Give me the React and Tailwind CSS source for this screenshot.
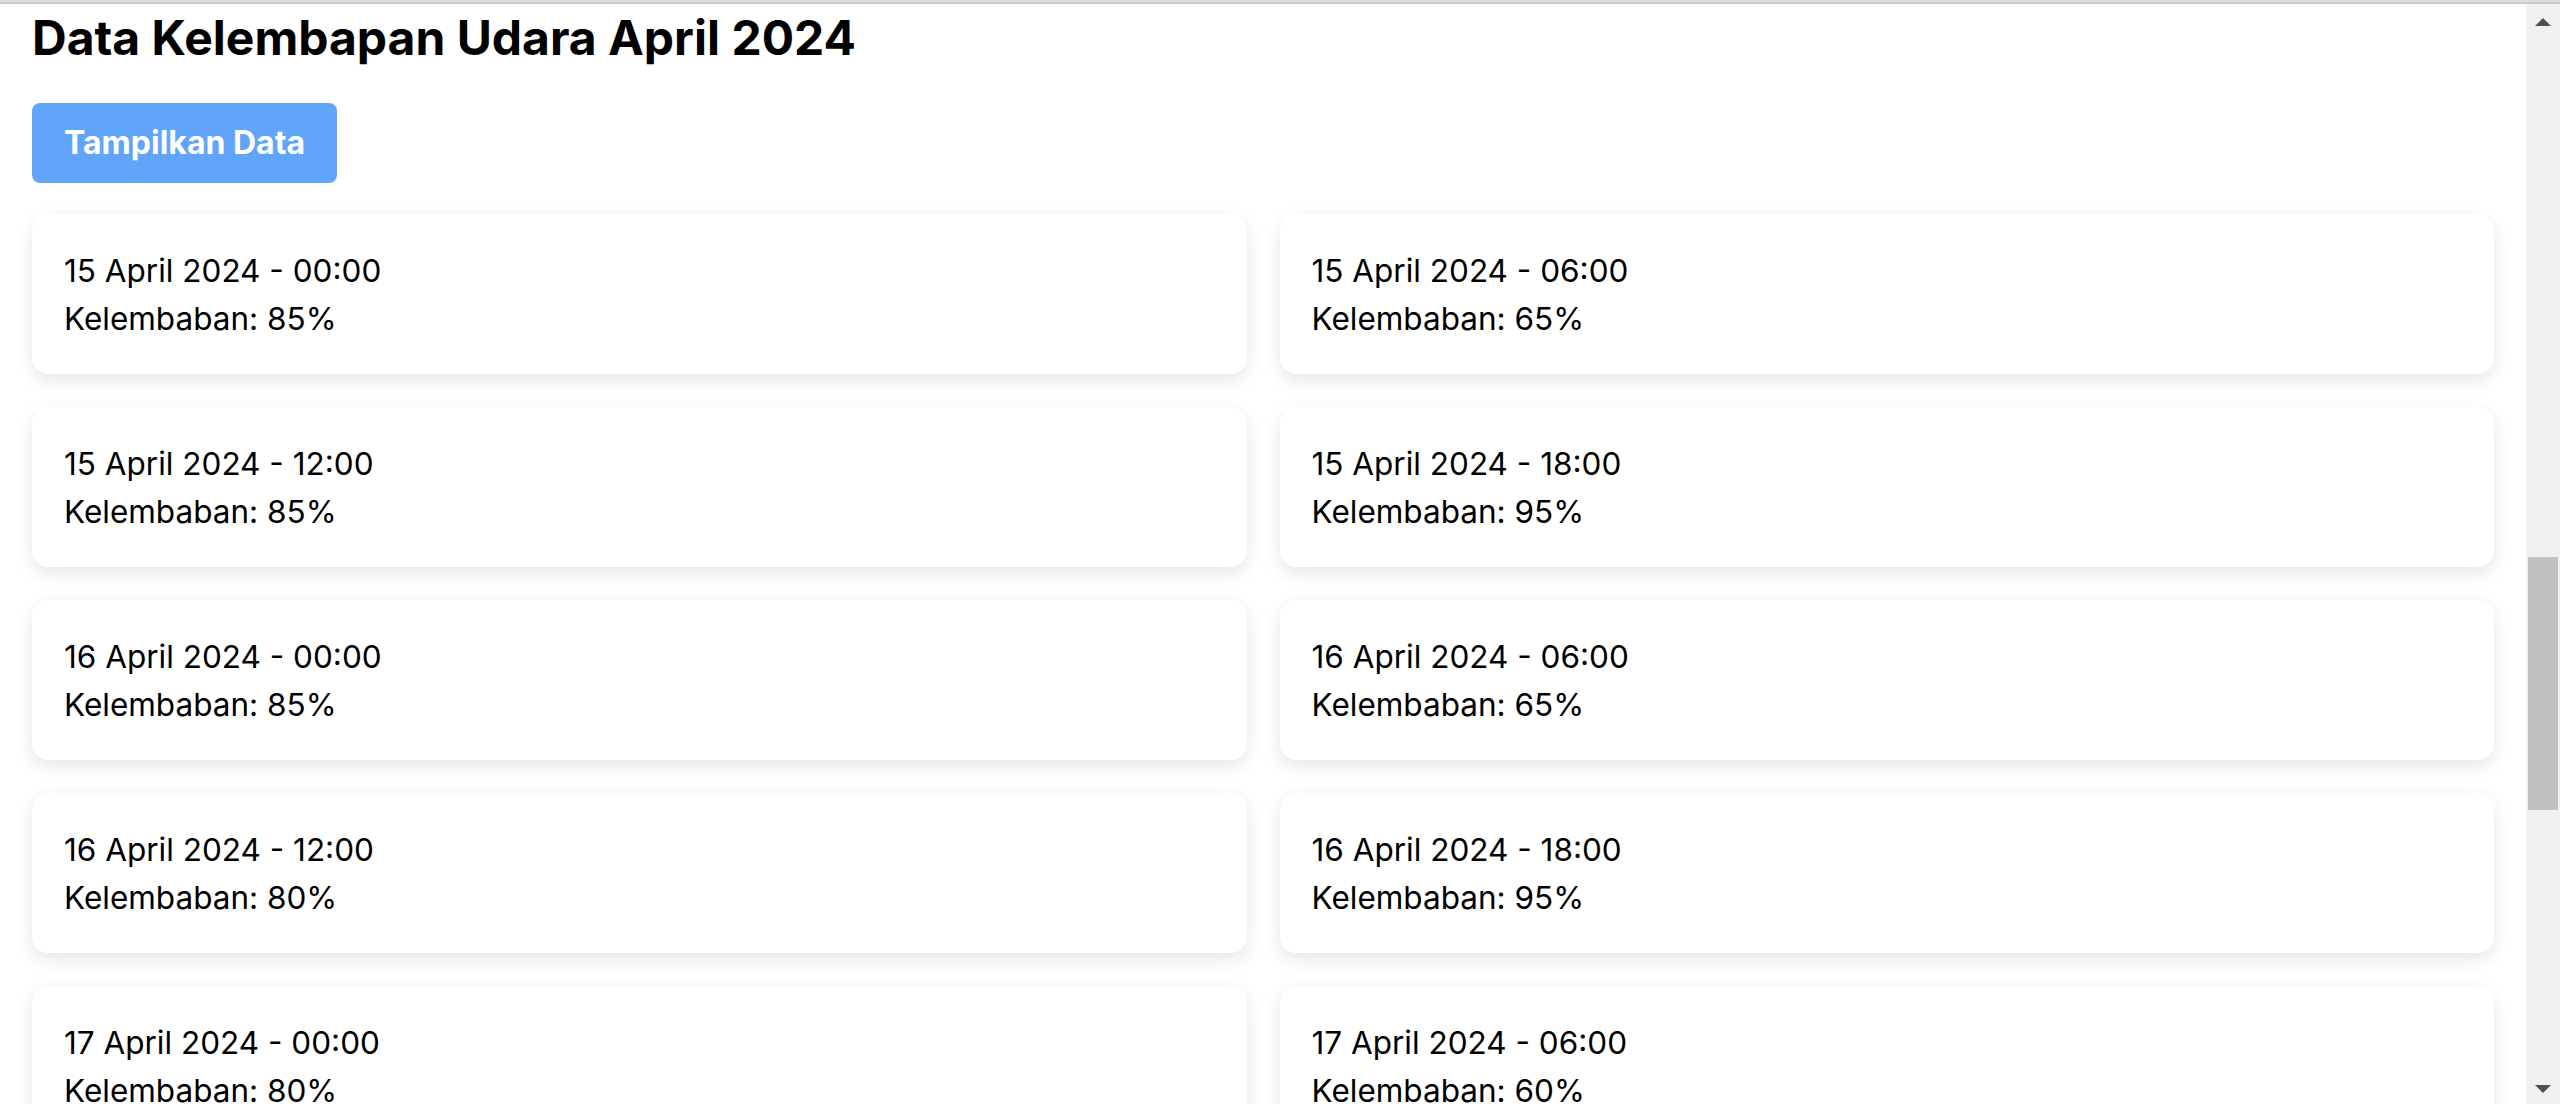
const data = [
    { date: '15 April 2024', time: '00:00', humidity: 85 },
    { date: '15 April 2024', time: '06:00', humidity: 65 },
    { date: '15 April 2024', time: '12:00', humidity: 85 },
    { date: '15 April 2024', time: '18:00', humidity: 95 },
    { date: '16 April 2024', time: '00:00', humidity: 85 },
    { date: '16 April 2024', time: '06:00', humidity: 65 },
    { date: '16 April 2024', time: '12:00', humidity: 80 },
    { date: '16 April 2024', time: '18:00', humidity: 95 },
    { date: '17 April 2024', time: '00:00', humidity: 80 },
    { date: '17 April 2024', time: '06:00', humidity: 60 },
];

const Scrollbar = () => (
    <div className="w-[34px] shrink-0 bg-[#f0f0f0] flex flex-col items-center">
        <svg width="16" height="8" viewBox="0 0 16 8" className="mt-[14px] shrink-0">
            <polygon points="8,0 16,8 0,8" fill="#505050" />
        </svg>
        <div className="h-[531px] shrink-0"></div>
        <div className="w-[30px] h-[253px] bg-[#c1c1c1] shrink-0"></div>
        <div className="flex-1"></div>
        <svg width="16" height="8" viewBox="0 0 16 8" className="mb-[11px] shrink-0">
            <polygon points="0,0 16,0 8,8" fill="#505050" />
        </svg>
    </div>
);

const App = () => {
    return (
        <div className="h-[1104px] w-[2560px] flex flex-col overflow-hidden bg-white font-['Inter',sans-serif] text-black">
            {/* browser top edge */}
            <div className="h-[2px] bg-[#dcdcdc] shrink-0"></div>
            <div className="h-[2px] bg-[#c6ccc9] shrink-0"></div>

            <div className="flex flex-1 min-h-0">
                <div className="flex-1 min-w-0 overflow-hidden px-[32px] pt-[2px]">
                    <h1 className="text-[48px] leading-[64px] font-bold mb-[33px]">Data Kelembapan Udara April 2024</h1>
                    <button className="bg-[#60a5fa] text-white font-bold text-[32px] leading-[48px] px-[32px] py-[16px] rounded-[8px] mb-[31px]">
                        Tampilkan Data
                    </button>
                    <div className="grid grid-cols-2 gap-x-[33px] gap-y-[33px]">
                        {data.map((item, i) => (
                            <div key={i} className="bg-white rounded-[16px] px-[32px] pt-[33px] pb-[31px] shadow-[0_6px_18px_rgba(0,0,0,0.1)] text-[31.5px] leading-[48px]">
                                <p>{item.date} - {item.time}</p>
                                <p>Kelembaban: {item.humidity}%</p>
                            </div>
                        ))}
                    </div>
                </div>
                <Scrollbar />
            </div>
        </div>
    );
};

export default App;
